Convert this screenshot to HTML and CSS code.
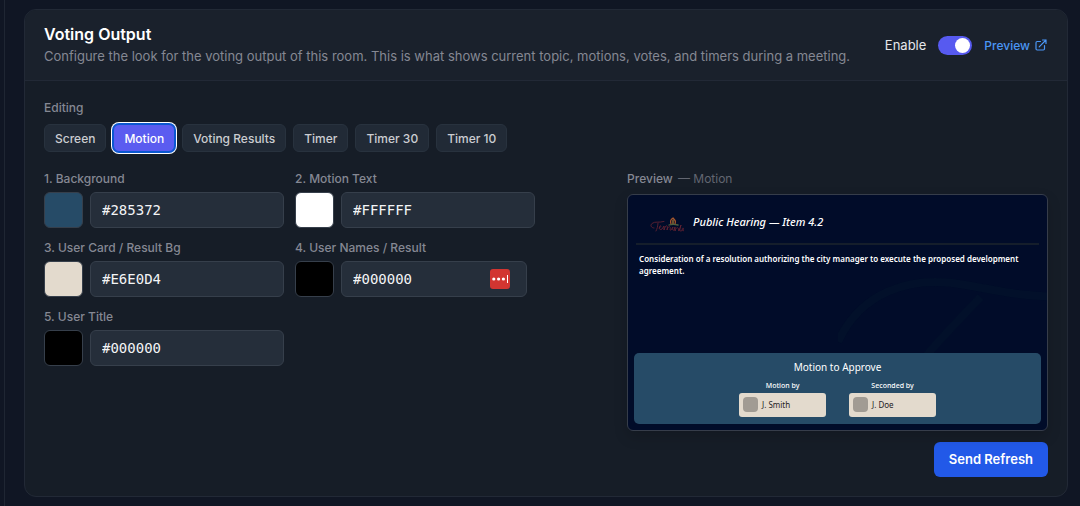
FILE: index.html
```
<!DOCTYPE html>
<html lang="en">
<head>
  <meta charset="UTF-8" />
  <meta name="viewport" content="width=device-width, initial-scale=1.0" />
  <title>Voting Output</title>
  <link rel="stylesheet" href="styles.css">
</head>
<body>
  <main class="page">
    <section class="card">
      <header class="card-header">
        <div class="card-title">
          <h1>Voting Output</h1>
          <p>Configure the look for the voting output of this room. This is what shows current topic, motions, votes, and timers during a meeting.</p>
        </div>
        <div class="card-actions">
          <label for="enable">Enable</label>
          <input type="checkbox" id="enable" class="toggle" checked />
          <a href="#" class="preview-link">Preview
            <svg viewBox="0 0 12 12" width="12" height="12" fill="none" stroke="currentColor" stroke-width="1.2" stroke-linecap="round" stroke-linejoin="round">
              <path d="M5.5 2.5H2.2C1.5 2.5 1 3 1 3.7v6.1C1 10.5 1.5 11 2.2 11h6.1c.7 0 1.2-.5 1.2-1.2V6.5" />
              <path d="M7.5 1H11v3.5M11 1 4.2 7.8" />
            </svg>
          </a>
        </div>
      </header>

      <div class="card-body">
        <div class="label">Editing</div>
        <div class="tabs">
          <button type="button">Screen</button>
          <button type="button" class="active">Motion</button>
          <button type="button">Voting Results</button>
          <button type="button">Timer</button>
          <button type="button">Timer 30</button>
          <button type="button">Timer 10</button>
        </div>

        <div class="columns">
          <div class="fields">
            <div class="field">
              <label class="label" for="background">1. Background</label>
              <div class="field-row">
                <button type="button" class="swatch blue" aria-label="Pick background"></button>
                <input type="text" id="background" value="#285372" />
              </div>
            </div>
            <div class="field">
              <label class="label" for="motionText">2. Motion Text</label>
              <div class="field-row">
                <button type="button" class="swatch white" aria-label="Pick motion text"></button>
                <input type="text" id="motionText" value="#FFFFFF" />
              </div>
            </div>
            <div class="field">
              <label class="label" for="userCard">3. User Card / Result Bg</label>
              <div class="field-row">
                <button type="button" class="swatch cream" aria-label="Pick user card"></button>
                <input type="text" id="userCard" value="#E6E0D4" />
              </div>
            </div>
            <div class="field">
              <label class="label" for="userNames">4. User Names / Result</label>
              <div class="field-row with-badge">
                <button type="button" class="swatch black" aria-label="Pick user names"></button>
                <input type="text" id="userNames" value="#000000" />
                <svg class="badge" viewBox="0 0 20 20" width="20" height="20">
                  <rect width="20" height="20" rx="3" fill="#d23531" />
                  <circle cx="3.8" cy="10" r="1.6" fill="#fff" />
                  <circle cx="8.6" cy="10" r="1.6" fill="#fff" />
                  <circle cx="13.4" cy="10" r="1.6" fill="#fff" />
                  <path d="M17.5 6v8" stroke="#fff" stroke-width="1" />
                </svg>
              </div>
            </div>
            <div class="field">
              <label class="label" for="userTitle">5. User Title</label>
              <div class="field-row">
                <button type="button" class="swatch black" aria-label="Pick user title"></button>
                <input type="text" id="userTitle" value="#000000" />
              </div>
            </div>
          </div>

          <div class="preview">
            <div class="label">Preview <span>— Motion</span></div>
            <div class="screen">
              <svg class="watermark" viewBox="0 0 210 100" fill="none" stroke="#02102a" stroke-width="8">
                <path d="M0 68C22 20 70 0 128 11s60 10 90 12" />
                <path d="M143 23C110 58 84 84 66 112" />
              </svg>
              <div class="screen-header">
                <svg class="logo" viewBox="0 0 34 16" width="34" height="16" fill="none" stroke-linecap="round">
                  <path d="M4 11C1 11 0 8 2 6.5 5 4 9 6 14 4.5M8 6C8 9 7 12 6 14M9 11c3-1 2-3 1-2s-1 5 2 3l2-3v4c1-3 2-5 3-4s0 3 0 4c1-3 2-4 3-3s-1 4 1 3l2-3c-1 3 0 4 1 3l1-3v4c1-3 2-4 3-3s0 3 1 3c1-2 1-4 2-6-1 4-2 6 0 6 3-1 3-3 2-3s-2 3 2 3" stroke="#6d2635" stroke-width=".8" />
                  <path d="M21 7c-1-3 0-5 2-6 2 2 3 3 2 6" stroke="#a8562d" stroke-width="1.3" />
                  <path d="M23 3v4" stroke="#d09a3b" stroke-width="1" />
                  <path d="M19 8c3-1 5-1 9 0" stroke="#4d6040" stroke-width="1.3" />
                </svg>
                <em>Public Hearing — Item 4.2</em>
              </div>
              <p class="topic">Consideration of a resolution authorizing the city manager to execute the proposed development agreement.</p>
              <div class="motion">
                <h2>Motion to Approve</h2>
                <div class="people">
                  <div class="person">
                    <span class="role">Motion by</span>
                    <div class="person-card"><i class="avatar"></i>J. Smith</div>
                  </div>
                  <div class="person">
                    <span class="role">Seconded by</span>
                    <div class="person-card"><i class="avatar"></i>J. Doe</div>
                  </div>
                </div>
              </div>
            </div>
            <button type="button" class="send">Send Refresh</button>
          </div>
        </div>
      </div>
    </section>
  </main>
</body>
</html>
```

FILE: styles.css
```
* {
  margin: 0;
  padding: 0;
  box-sizing: border-box;
}
body {
  font-family: Inter, sans-serif;
  background: #101624;
  color: #e5e7eb;
  min-height: 100vh;
  padding-left: 4px;
}
button, input {
  font-family: inherit;
}
.page {
  min-height: 100vh;
  border-left: 1px solid #1f2633;
  padding: 9px 12px 9px 19px;
}
.card {
  background: #161d27;
  border: 1px solid #222936;
  border-radius: 12px;
  overflow: hidden;
}
.card-header {
  display: flex;
  justify-content: space-between;
  align-items: center;
  gap: 20px;
  padding: 13px 20px 13px 19px;
  background: #1a212c;
  border-bottom: 1px solid #222936;
}
.card-title h1 {
  font-size: 16px;
  line-height: 22px;
  font-weight: 600;
  color: #fff;
}
.card-title p {
  font-size: 13px;
  line-height: 22px;
  color: #858893;
}
.card-actions {
  display: flex;
  align-items: center;
  gap: 12px;
  font-size: 13px;
  white-space: nowrap;
}
.toggle {
  appearance: none;
  display: flex;
  width: 34px;
  height: 19px;
  padding: 2px;
  border-radius: 10px;
  background: #575af0;
  justify-content: flex-end;
  cursor: pointer;
}
.toggle::before {
  content: "";
  width: 15px;
  height: 15px;
  border-radius: 50%;
  background: #fff;
}
.toggle:not(:checked) {
  background: #374151;
  justify-content: flex-start;
}
.preview-link {
  display: flex;
  align-items: center;
  gap: 5px;
  color: #4a96f5;
  font-size: 12px;
  font-weight: 500;
  text-decoration: none;
}
.card-body {
  padding: 18px 19px 19px;
}
.label {
  display: block;
  font-size: 12px;
  line-height: 18px;
  font-weight: 500;
  color: #858893;
}
.tabs {
  display: flex;
  flex-wrap: wrap;
  gap: 7px;
  margin-top: 7px;
}
.tabs button {
  height: 28px;
  padding: 0 10px;
  border: 1px solid #28323e;
  border-radius: 6px;
  background: #212a36;
  color: #cbcdd1;
  font-size: 12px;
  font-weight: 500;
  cursor: pointer;
}
.tabs .active {
  background: #5b5cf0;
  border-color: #0b57d0;
  color: #fff;
  box-shadow: 0 0 0 1px #0b57d0, 0 0 0 2px #fff;
}
.columns {
  display: grid;
  grid-template-columns: minmax(0, 7fr) minmax(0, 6fr);
  gap: 92px;
  margin-top: 18px;
}
.fields {
  display: grid;
  grid-template-columns: repeat(2, minmax(0, 1fr));
  align-content: start;
  gap: 11px;
}
.field-row {
  display: flex;
  gap: 7px;
  margin-top: 4px;
}
.field-row input {
  flex: 1;
  min-width: 0;
  height: 36px;
  padding: 0 11px;
  border: 1px solid #363f4b;
  border-radius: 6px;
  background: #252e3a;
  color: #f3f4f6;
  font-family: "DejaVu Sans Mono", monospace;
  font-size: 14px;
}
.with-badge {
  position: relative;
  padding-right: 8px;
}
.badge {
  position: absolute;
  top: 8px;
  right: 25px;
}
.swatch {
  width: 39px;
  height: 36px;
  border: 1px solid #363f4b;
  border-radius: 6px;
  cursor: pointer;
}
.blue {
  background: #264b67;
}
.white {
  background: #fff;
}
.cream {
  background: #e3dacd;
}
.black {
  background: #000;
}
.preview {
  display: flex;
  flex-direction: column;
}
.preview .label span {
  margin-left: 2px;
  font-weight: 400;
  color: #626671;
}
.screen {
  position: relative;
  display: flex;
  flex-direction: column;
  aspect-ratio: 16 / 9;
  margin-top: 6px;
  padding: 6px;
  border: 1px solid #363d4a;
  border-radius: 6px;
  background: #010c29;
  color: #fff;
  font-family: "Noto Sans", sans-serif;
  box-shadow: 0 6px 14px rgba(0, 0, 0, 0.15);
  overflow: hidden;
}
.watermark {
  position: absolute;
  right: 0;
  bottom: 56px;
  width: 50%;
}
.screen-header {
  display: flex;
  align-items: center;
  gap: 9px;
  height: 44px;
  margin: 0 2px;
  padding: 0 14px 2px;
  border-bottom: 2px solid #151e2b;
  font-size: 11px;
  font-weight: 500;
}
.logo {
  margin-top: 8px;
}
.topic {
  position: relative;
  padding: 8px 5px;
  font-size: 8px;
  line-height: 12px;
  font-weight: 600;
}
.motion {
  position: relative;
  margin-top: auto;
  padding: 7px;
  border-radius: 5px;
  background: #264b67;
  text-align: center;
}
.motion h2 {
  font-size: 10px;
  line-height: 15px;
  font-weight: 400;
}
.people {
  display: flex;
  justify-content: center;
  gap: 23px;
  margin-top: 6px;
}
.person {
  width: 87px;
}
.role {
  display: block;
  font-size: 7px;
  line-height: 10px;
  font-weight: 500;
}
.person-card {
  display: flex;
  align-items: center;
  gap: 4px;
  height: 24px;
  margin-top: 2px;
  padding: 0 4px;
  border-radius: 3px;
  background: #e3dacd;
  color: #25221f;
  font-size: 8px;
}
.avatar {
  width: 15px;
  height: 15px;
  border-radius: 4px;
  background: #a19b93;
}
.send {
  align-self: flex-end;
  height: 35px;
  margin-top: 11px;
  padding: 0 15px;
  border: none;
  border-radius: 6px;
  background: #2259e8;
  color: #fff;
  font-size: 13px;
  font-weight: 600;
  cursor: pointer;
}
```
